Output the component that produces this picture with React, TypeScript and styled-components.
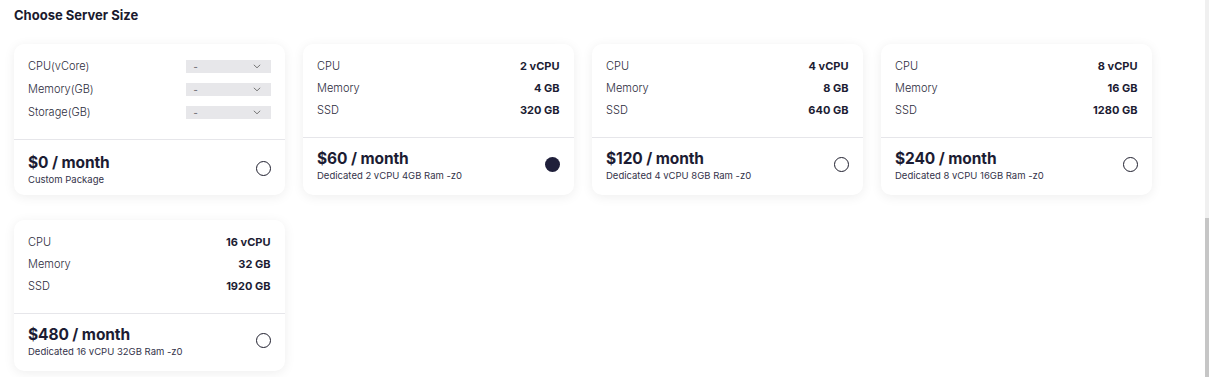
import * as React from 'react';
import styled, { createGlobalStyle } from 'styled-components';

type Plan = {
  id: number;
  cpu: string;
  memory: string;
  ssd: string;
  price: string;
  description: string;
};

const plans: Array<Plan> = [
  { id: 1, cpu: '2 vCPU', memory: '4 GB', ssd: '320 GB', price: '$60', description: 'Dedicated 2 vCPU 4GB Ram -z0' },
  { id: 2, cpu: '4 vCPU', memory: '8 GB', ssd: '640 GB', price: '$120', description: 'Dedicated 4 vCPU 8GB Ram -z0' },
  { id: 3, cpu: '8 vCPU', memory: '16 GB', ssd: '1280 GB', price: '$240', description: 'Dedicated 8 vCPU 16GB Ram -z0' },
  { id: 4, cpu: '16 vCPU', memory: '32 GB', ssd: '1920 GB', price: '$480', description: 'Dedicated 16 vCPU 32GB Ram -z0' },
];

const GlobalStyle = createGlobalStyle`
  html, body {
    margin: 0;
    background: #ffffff;
    font-family: Inter, 'Open Sans', sans-serif;
    color: #1c1c33;
  }
`;

const Page = styled.div({
  position: 'relative',
  width: 1209,
  height: 377,
  overflow: 'hidden',
  padding: '7px 14px 0',
  boxSizing: 'border-box',
});

const Heading = styled.h3({
  margin: 0,
  fontSize: 13,
  fontWeight: 700,
  lineHeight: '16px',
  color: '#1a1a2e',
});

const Grid = styled.div({
  display: 'grid',
  gridTemplateColumns: 'repeat(4, 270.5px)',
  columnGap: 18.5,
  rowGap: 25,
  marginTop: 21,
});

const Card = styled.div({
  display: 'flex',
  flexDirection: 'column',
  height: 151,
  background: '#ffffff',
  borderRadius: 10,
  boxShadow: '0 2px 12px rgba(0, 0, 0, 0.07)',
  boxSizing: 'border-box',
});

const Specs = styled.div<{ $custom?: boolean }>(({ $custom }) => ({
  flex: 1,
  display: 'flex',
  flexDirection: 'column',
  gap: $custom ? 7 : 6,
  padding: '14px 14px 0',
  borderBottom: '1px solid #e6e6ea',
}));

const SpecRow = styled.div({
  display: 'flex',
  justifyContent: 'space-between',
  alignItems: 'center',
  height: 16,
  fontSize: 11,
});

const SpecLabel = styled.span({
  fontWeight: 300,
  color: '#2c2c3c',
});

const SpecValue = styled.span({
  fontWeight: 700,
  color: '#1c1c33',
});

const Select = styled.div({
  display: 'flex',
  alignItems: 'center',
  justifyContent: 'space-between',
  width: 85,
  height: 13,
  padding: '0 10px 0 8px',
  boxSizing: 'border-box',
  background: '#e7e7ea',
  color: '#7a7a80',
  fontSize: 9,
  fontWeight: 700,
});

const Footer = styled.div<{ $custom?: boolean }>(({ $custom }) => ({
  display: 'flex',
  alignItems: 'center',
  justifyContent: 'space-between',
  height: $custom ? 55 : 57,
  padding: $custom ? '3px 14px 0' : '0 14px 2px',
  boxSizing: 'border-box',
}));

const PriceBlock = styled.div({
  display: 'flex',
  flexDirection: 'column',
  gap: 2,
});

const Price = styled.div({
  fontSize: 15.5,
  fontWeight: 700,
  lineHeight: '19px',
  color: '#1c1c33',
  letterSpacing: -0.1,
});

const Caption = styled.div({
  fontSize: 9.5,
  fontWeight: 400,
  lineHeight: '12px',
  color: '#33334a',
});

const Radio = styled.span<{ $checked?: boolean }>(({ $checked }) => ({
  width: 15,
  height: 15,
  borderRadius: '50%',
  boxSizing: 'border-box',
  border: $checked ? 'none' : '1.3px solid #1f1f2e',
  background: $checked ? '#1f1f3a' : 'transparent',
  marginTop: -2,
}));

const Scrollbar = styled.div({
  position: 'absolute',
  top: 0,
  right: 0,
  width: 4,
  height: '100%',
  background: '#f0f0f0',
});

const ScrollThumb = styled.div({
  position: 'absolute',
  top: 218,
  left: 0,
  right: 0,
  bottom: 0,
  background: '#c6c6c6',
});

const Chevron = () => (
  <svg width="8" height="5" viewBox="0 0 8 5" fill="none">
    <path d="M0.8 0.8 L4 3.8 L7.2 0.8" stroke="#777" strokeWidth="1" />
  </svg>
);

export default function App(): React.ReactElement {
  return (
    <Page>
      <GlobalStyle />
      <Heading>Choose Server Size</Heading>

      <Grid>
        <Card>
          <Specs $custom>
            {['CPU(vCore)', 'Memory(GB)', 'Storage(GB)'].map(label => (
              <SpecRow key={label}>
                <SpecLabel>{label}</SpecLabel>
                <Select>
                  <span>-</span>
                  <Chevron />
                </Select>
              </SpecRow>
            ))}
          </Specs>
          <Footer $custom>
            <PriceBlock>
              <Price>$0 / month</Price>
              <Caption>Custom Package</Caption>
            </PriceBlock>
            <Radio />
          </Footer>
        </Card>

        {plans.map(plan => (
          <Card key={plan.id}>
            <Specs>
              <SpecRow>
                <SpecLabel>CPU</SpecLabel>
                <SpecValue>{plan.cpu}</SpecValue>
              </SpecRow>
              <SpecRow>
                <SpecLabel>Memory</SpecLabel>
                <SpecValue>{plan.memory}</SpecValue>
              </SpecRow>
              <SpecRow>
                <SpecLabel>SSD</SpecLabel>
                <SpecValue>{plan.ssd}</SpecValue>
              </SpecRow>
            </Specs>
            <Footer>
              <PriceBlock>
                <Price>{plan.price} / month</Price>
                <Caption>{plan.description}</Caption>
              </PriceBlock>
              <Radio $checked={plan.id === 1} />
            </Footer>
          </Card>
        ))}
      </Grid>

      <Scrollbar>
        <ScrollThumb />
      </Scrollbar>
    </Page>
  );
}
